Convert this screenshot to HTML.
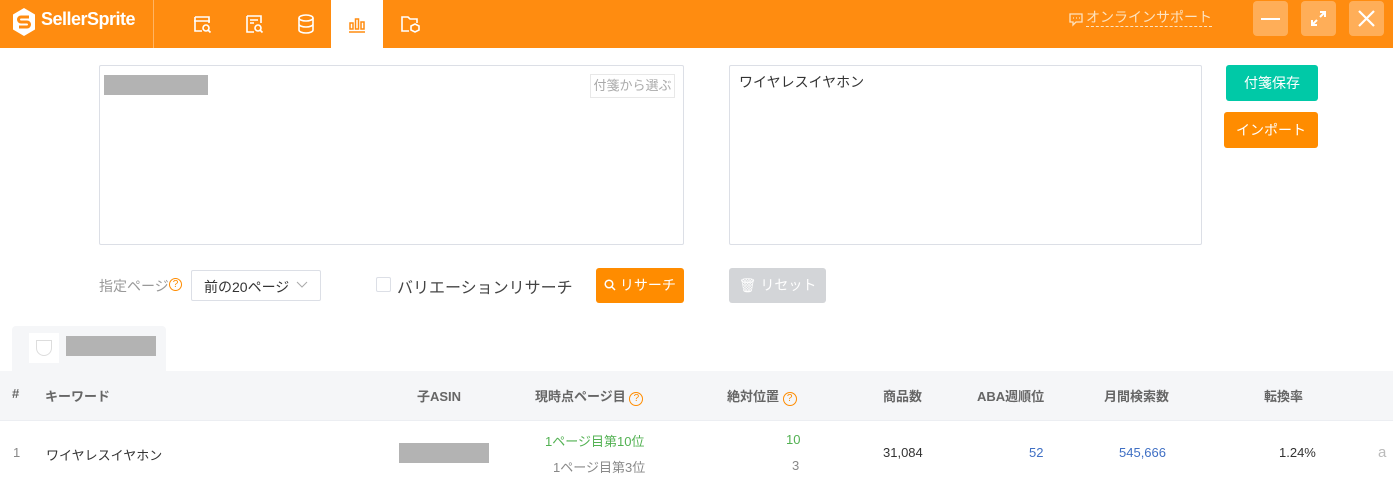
<!DOCTYPE html>
<html><head><meta charset="utf-8"><style>
*{box-sizing:border-box;margin:0;padding:0}
body{width:1393px;height:480px;overflow:hidden;background:#fff;font-family:"Liberation Sans","Noto Sans CJK JP",sans-serif;position:relative;color:#333}
.a{position:absolute}
.hdr{left:0;top:0;width:1393px;height:48px;background:#ff8c10}
.ic{top:12px;width:24px;height:24px}
.wb{top:1px;width:35px;height:35px;background:rgba(255,255,255,.3);border-radius:4px}
.box{border:1px solid #dcdfe6;border-radius:2px}
.gray{background:#b3b3b3}
.th{font-size:13px;font-weight:bold;color:#666;top:386px}
.td{font-size:13px;top:445px}
</style></head><body>
<div class="a hdr"></div>
<svg class="a" style="left:11px;top:7px" width="26" height="30" viewBox="0 0 26 30"><path d="M13 1 L24 7.5 V22.5 L13 29 L2 22.5 V7.5Z" fill="#fff"/><path d="M18 10 H10 a2.5 2.5 0 0 0 0 5 H16 a2.5 2.5 0 0 1 0 5 H8" stroke="#ff8c10" stroke-width="3" fill="none"/></svg>
<div class="a" style="left:41px;top:9px;color:#fff;font-size:18px;font-weight:bold;letter-spacing:-0.5px">SellerSprite</div>
<div class="a" style="left:153px;top:0;width:1px;height:48px;background:rgba(255,255,255,.35)"></div>
<svg class="a ic" style="left:190px" viewBox="0 0 24 24" fill="none" stroke="#fff" stroke-width="1.6"><path d="M4 9h16M5 5h14v6M5 5v14h7"/><circle cx="16" cy="16" r="3"/><path d="M18 18l2.5 2.5"/></svg>
<svg class="a ic" style="left:242px" viewBox="0 0 24 24" fill="none" stroke="#fff" stroke-width="1.6"><path d="M5 4h14v7M5 4v16h7M8 8h8M8 11h4"/><circle cx="16" cy="16" r="3"/><path d="M18 18l2.5 2.5"/></svg>
<svg class="a ic" style="left:294px" viewBox="0 0 24 24" fill="none" stroke="#fff" stroke-width="1.6"><ellipse cx="12" cy="6" rx="7" ry="3"/><path d="M5 6v12c0 1.7 3 3 7 3s7-1.3 7-3V6M5 12c0 1.7 3 3 7 3s7-1.3 7-3"/></svg>
<div class="a" style="left:331px;top:0;width:52px;height:48px;background:#fff"></div>
<svg class="a ic" style="left:345px" viewBox="0 0 24 24" fill="none" stroke="#ff8c10" stroke-width="1.5"><rect x="5" y="11" width="3" height="6"/><rect x="10.5" y="7" width="3" height="10"/><rect x="16" y="10" width="3" height="7"/><path d="M4 20h16"/></svg>
<svg class="a ic" style="left:398px" viewBox="0 0 24 24" fill="none" stroke="#fff" stroke-width="1.6"><path d="M11 19H4V5h6l2 2h7v4"/><path d="M17 12l4 2v4l-4 2-4-2v-4z"/></svg>
<svg class="a" style="left:1068px;top:11px" width="16" height="16" viewBox="0 0 16 16" fill="none" stroke="#fde3c0" stroke-width="1.3"><path d="M2 3h12v8H8l-3 3v-3H2z"/><path d="M5 7h1M8 7h1M11 7h1"/></svg>
<div class="a" style="left:1086px;top:9px;color:#fde3c0;font-size:14px;border-bottom:1px dashed #fde3c0;line-height:17px">オンラインサポート</div>
<div class="a wb" style="left:1253px"></div><div class="a" style="left:1261px;top:18px;width:19px;height:2px;background:#fff"></div>
<div class="a wb" style="left:1301px"></div>
<svg class="a" style="left:1309px;top:9px" width="19" height="19" viewBox="0 0 19 19" fill="none" stroke="#fff" stroke-width="2"><path d="M11 3h5v5M16 3l-5 5M8 16H3v-5M3 16l5-5"/></svg>
<div class="a wb" style="left:1349px"></div>
<svg class="a" style="left:1357px;top:9px" width="19" height="19" viewBox="0 0 19 19" stroke="#fff" stroke-width="2.2"><path d="M2 2l15 15M17 2L2 17"/></svg>

<div class="a box" style="left:99px;top:65px;width:585px;height:180px"></div>
<div class="a gray" style="left:104px;top:75px;width:104px;height:20px"></div>
<div class="a" style="left:590px;top:74px;width:85px;height:24px;border:1px solid #e8e8e8;color:#aaa;font-size:13px;line-height:22px;text-align:center">付箋から選ぶ</div>
<div class="a box" style="left:729px;top:65px;width:473px;height:180px"></div>
<div class="a" style="left:739px;top:72px;font-size:14px;color:#333">ワイヤレスイヤホン</div>
<div class="a" style="left:1226px;top:65px;width:92px;height:36px;background:#00c9a7;border-radius:3px;color:#fff;font-size:14px;line-height:36px;text-align:center">付箋保存</div>
<div class="a" style="left:1224px;top:112px;width:94px;height:36px;background:#ff8c00;border-radius:3px;color:#fff;font-size:14px;line-height:36px;text-align:center">インポート</div>

<div class="a" style="left:99px;top:276px;font-size:14px;color:#999">指定ページ</div>
<div class="a" style="left:169px;top:278px;width:13px;height:13px;border:1px solid #ff8c00;border-radius:50%;color:#ff8c00;font-size:10px;line-height:11px;text-align:center">?</div>
<div class="a box" style="left:191px;top:270px;width:130px;height:31px;font-size:14px;padding:6px 0 0 12px;color:#333">前の20ページ</div>
<svg class="a" style="left:296px;top:281px" width="12" height="8" viewBox="0 0 12 8" fill="none" stroke="#aaa"><path d="M1 1l5 5 5-5"/></svg>
<div class="a" style="left:376px;top:277px;width:15px;height:15px;border:1px solid #dcdfe6;border-radius:2px"></div>
<div class="a" style="left:397px;top:274px;font-size:16px;color:#444">バリエーションリサーチ</div>
<div class="a" style="left:596px;top:268px;width:88px;height:35px;background:#ff8c00;border-radius:3px;color:#fff;font-size:14px;line-height:35px;text-align:center"><svg width="12" height="12" viewBox="0 0 12 12" fill="none" stroke="#fff" stroke-width="1.5" style="vertical-align:-1px"><circle cx="5" cy="5" r="3.8"/><path d="M8 8l3 3"/></svg> リサーチ</div>
<div class="a" style="left:729px;top:268px;width:97px;height:35px;background:#d3d5d8;border-radius:3px;color:#fff;font-size:14px;line-height:35px;text-align:center">🗑 リセット</div>

<div class="a" style="left:12px;top:326px;width:154px;height:46px;background:#f5f6f8;border-radius:4px 4px 0 0"></div>
<div class="a" style="left:29px;top:333px;width:30px;height:30px;background:#fff"></div>
<div class="a" style="left:36px;top:340px;width:16px;height:16px;border:1px solid #ddd;border-radius:0 0 8px 8px"></div>
<div class="a gray" style="left:66px;top:336px;width:90px;height:20px"></div>
<div class="a" style="left:0;top:371px;width:1393px;height:50px;background:#f5f6f8;border-bottom:1px solid #eceef2"></div>
<div class="a th" style="left:12px">#</div>
<div class="a th" style="left:45px">キーワード</div>
<div class="a th" style="left:417px">子ASIN</div>
<div class="a th" style="left:535px">現時点ページ目 <span style="display:inline-block;width:14px;height:14px;border:1px solid #ff8c00;border-radius:50%;color:#ff8c00;font-size:10px;line-height:12px;text-align:center;font-weight:normal">?</span></div>
<div class="a th" style="left:727px">絶対位置 <span style="display:inline-block;width:14px;height:14px;border:1px solid #ff8c00;border-radius:50%;color:#ff8c00;font-size:10px;line-height:12px;text-align:center;font-weight:normal">?</span></div>
<div class="a th" style="left:883px">商品数</div>
<div class="a th" style="left:977px">ABA週順位</div>
<div class="a th" style="left:1104px">月間検索数</div>
<div class="a th" style="left:1264px">転換率</div>

<div class="a td" style="left:13px;color:#888">1</div>
<div class="a td" style="left:46px;color:#333">ワイヤレスイヤホン</div>
<div class="a gray" style="left:399px;top:443px;width:90px;height:20px"></div>
<div class="a" style="left:545px;top:431px;font-size:13px;color:#52b152">1ページ目第10位</div>
<div class="a" style="left:553px;top:457px;font-size:13px;color:#888">1ページ目第3位</div>
<div class="a" style="left:786px;top:432px;font-size:13px;color:#52b152">10</div>
<div class="a" style="left:792px;top:458px;font-size:13px;color:#888">3</div>
<div class="a td" style="left:883px">31,084</div>
<div class="a td" style="left:1029px;color:#3f6fc4">52</div>
<div class="a td" style="left:1119px;color:#3f6fc4">545,666</div>
<div class="a td" style="left:1279px">1.24%</div>
<div class="a" style="left:1378px;top:444px;font-size:15px;color:#bbb">a</div>
</body></html>
